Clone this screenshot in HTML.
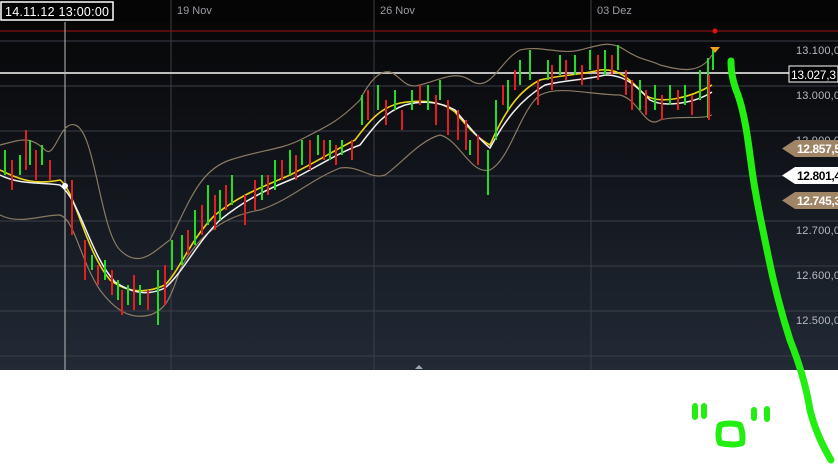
<!DOCTYPE html>
<html><head><meta charset="utf-8"><style>
html,body{margin:0;padding:0;background:#fff;width:838px;height:467px;overflow:hidden}
svg{display:block}
text{font-family:"Liberation Sans",sans-serif}
</style></head><body>
<svg width="838" height="467" viewBox="0 0 838 467">
<defs>
<linearGradient id="bg" x1="0" y1="0" x2="0" y2="1">
<stop offset="0" stop-color="#050505"/><stop offset="0.45" stop-color="#11141a"/><stop offset="1" stop-color="#222a36"/>
</linearGradient>
</defs>
<rect x="0" y="0" width="838" height="370" fill="url(#bg)"/>
<rect x="0" y="0" width="838" height="22" fill="#050505"/>
<g stroke="#3c3e48" stroke-width="1">
<line x1="0" y1="41" x2="838" y2="41"/><line x1="0" y1="86" x2="838" y2="86"/>
<line x1="0" y1="131" x2="838" y2="131"/><line x1="0" y1="176" x2="838" y2="176"/>
<line x1="0" y1="221" x2="838" y2="221"/><line x1="0" y1="266" x2="838" y2="266"/>
<line x1="0" y1="311" x2="838" y2="311"/><line x1="0" y1="356" x2="838" y2="356"/>
<line x1="171" y1="0" x2="171" y2="370"/><line x1="374" y1="0" x2="374" y2="370"/><line x1="591" y1="0" x2="591" y2="370"/>
</g>
<line x1="0" y1="31" x2="838" y2="31" stroke="#a01010" stroke-width="1"/>
<circle cx="715" cy="31" r="2.5" fill="#e01010"/>
<line x1="0" y1="73" x2="838" y2="73" stroke="#bdbdbd" stroke-width="2"/>
<line x1="65" y1="22" x2="65" y2="370" stroke="#bbbbbb" stroke-width="1"/>
<g fill="none" stroke="#8a7a62" stroke-width="1.2">
<path d="M0 145 C20 140 30 135 45 150 C55 160 60 120 75 125 C95 130 100 230 120 250 C140 270 155 250 170 240 C190 200 200 170 230 160 C260 150 280 150 300 140 C330 125 340 120 360 100 C370 80 380 70 390 72 C400 75 405 90 420 85 C440 80 455 70 470 80 C490 95 500 60 520 50 C540 45 560 55 580 50 C600 45 610 40 625 50 C640 60 650 60 660 65 C680 70 700 75 712 55"/>
<path d="M0 215 C20 225 40 215 60 215 C75 220 80 260 100 290 C115 310 130 320 150 315 C165 310 170 300 180 270 C200 230 230 215 260 210 C290 200 310 180 340 168 C360 165 370 180 385 175 C400 165 420 140 440 135 C460 140 470 175 490 170 C510 160 520 110 540 95 C560 85 590 95 620 95 C640 100 645 130 660 120 C680 115 700 120 712 115"/>
</g>
<path d="M0 170 C20 180 35 185 60 180 C75 190 85 250 110 280 C130 295 150 292 165 285 C180 270 190 240 215 215 C240 195 260 188 290 175 C320 160 335 150 355 140 C370 120 380 108 400 103 C420 100 440 100 455 112 C470 130 480 140 490 145 C505 110 520 90 540 80 C560 75 580 75 600 70 C620 68 630 80 645 95 C660 105 690 98 712 85" fill="none" stroke="#e8d21a" stroke-width="1.6"/>
<path d="M0 175 C20 185 40 182 60 185 C80 200 90 255 115 282 C135 295 150 295 165 288 C185 270 195 245 220 220 C245 200 265 190 295 178 C320 165 340 152 360 145 C375 125 385 112 405 105 C425 100 440 102 455 110 C470 128 480 140 490 148 C505 120 520 100 545 85 C565 80 585 80 605 75 C625 75 635 85 650 100 C665 108 695 103 712 92" fill="none" stroke="#f0f0f0" stroke-width="1.5"/>
<path stroke="#22dd22" stroke-width="2" fill="none" d="M5 150v25 M20 155v20 M30 140v25 M42 145v20 M92 255v15 M105 260v20 M118 280v20 M128 285v20 M140 285v20 M158 270v55 M172 240v30 M182 235v30 M195 210v35 M208 185v40 M220 190v30 M232 175v30 M262 175v25 M275 160v30 M290 150v25 M302 140v25 M318 135v20 M330 140v20 M342 140v15 M362 95v30 M378 85v25 M395 90v20 M412 90v20 M428 85v25 M440 80v20 M470 140v15 M488 150v45 M496 100v40 M508 80v30 M520 60v25 M530 50v30 M548 60v20 M560 55v20 M575 55v20 M590 50v20 M605 50v25 M618 45v25 M640 80v30 M655 85v25 M670 85v20 M685 85v20 M700 70v30 M708 58v60 M713 50v20"/>
<path stroke="#e02020" stroke-width="2" fill="none" d="M12 160v30 M26 130v40 M36 150v30 M50 160v20 M72 180v55 M85 240v40 M98 265v20 M112 270v25 M122 290v25 M134 275v35 M148 290v20 M165 265v40 M188 230v25 M202 205v30 M215 195v35 M226 185v25 M245 195v30 M255 180v30 M268 175v20 M282 160v20 M296 155v25 M310 140v30 M324 140v20 M336 145v20 M352 140v20 M368 90v30 M386 100v25 M402 110v20 M420 85v20 M436 95v30 M448 100v35 M458 110v30 M466 120v30 M478 135v30 M503 85v20 M515 70v20 M538 80v25 M552 65v25 M566 60v20 M582 65v20 M598 55v25 M612 55v20 M626 70v25 M632 80v30 M646 90v25 M662 95v25 M678 90v20 M692 95v20 M709 75v45"/>
<circle cx="65" cy="186" r="3" fill="#fff"/>
<path d="M710 47h10l-5 6z" fill="#f0a020"/>
<rect x="1" y="2" width="112" height="18" fill="#000" stroke="#fff" stroke-width="1.5"/>
<text x="5" y="16" fill="#fff" font-size="12.5" textLength="104">14.11.12 13:00:00</text>
<g fill="#9a9aa4" font-size="11">
<text x="177" y="14">19 Nov</text><text x="380" y="14">26 Nov</text><text x="597" y="14">03 Dez</text>
</g>
<g fill="#b8b8c0" font-size="11">
<text x="796" y="54" textLength="44">13.100,0</text><text x="796" y="99" textLength="44">13.000,0</text><text x="796" y="144" textLength="44">12.900,0</text>
<text x="796" y="234" textLength="44">12.700,0</text><text x="796" y="279" textLength="44">12.600,0</text><text x="796" y="324" textLength="44">12.500,0</text>
</g>
<rect x="789" y="66" width="49" height="16" fill="#000" stroke="#fff" stroke-width="1"/>
<text x="791" y="79" fill="#fff" font-size="12" textLength="45">13.027,3</text>
<path d="M795 140H838V157H795L782 148.5Z" fill="#a08466"/>
<text x="797" y="153" fill="#fff" font-size="12" font-weight="bold" textLength="44">12.857,5</text>
<path d="M795 167H838V184H795L782 175.5Z" fill="#ffffff"/>
<text x="797" y="180" fill="#000" font-size="12" font-weight="bold" textLength="44">12.801,4</text>
<path d="M795 192H838V209H795L782 200.5Z" fill="#a08466"/>
<text x="797" y="205" fill="#fff" font-size="12" font-weight="bold" textLength="44">12.745,3</text>
<path d="M415 369l4-4 4 4z" fill="#9aa"/>
<g fill="none" stroke="#22ee11" stroke-linecap="round" stroke-linejoin="round">
<path stroke-width="7" d="M731 61C731 75 734 85 738 95C745 115 748 140 752 170C756 200 762 225 768 255C775 290 782 315 790 340C798 360 806 385 810 410C815 430 822 445 831 460"/>
<path stroke-width="6" d="M695 406v11 M704 406v10 M754 410v8 M767 409v10 M720 425c-2 6-2 14 0 18c8 2 17 2 22 0c1-6 0-13-2-18c-6-2-14-2-20 0z"/>
</g>
</svg>
</body></html>
